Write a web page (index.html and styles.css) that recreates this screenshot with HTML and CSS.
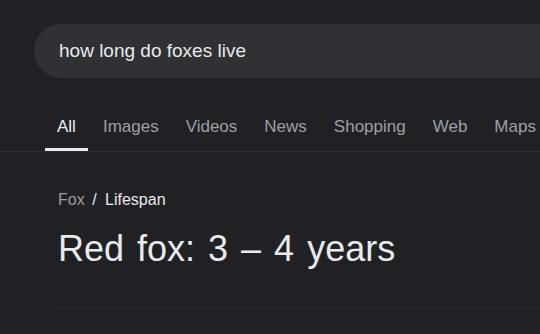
FILE: index.html
```html
<!DOCTYPE html>
<html lang="en">
<head>
    <meta charset="UTF-8">
    <meta name="viewport" content="width=device-width, initial-scale=1.0">
    <title>how long do foxes live - Search</title>
    <link rel="stylesheet" href="styles.css">
</head>
<body>
    <div class="search-bar">
        <span class="query">how long do foxes live</span>
    </div>

    <nav class="tabs">
        <a class="tab active" href="#">All</a>
        <a class="tab" href="#">Images</a>
        <a class="tab" href="#">Videos</a>
        <a class="tab" href="#">News</a>
        <a class="tab" href="#">Shopping</a>
        <a class="tab" href="#">Web</a>
        <a class="tab" href="#">Maps</a>
    </nav>

    <div class="answer">
        <div class="crumbs">
            <span class="crumb-parent">Fox</span>
            <span class="crumb-sep">/</span>
            <span class="crumb-current">Lifespan</span>
        </div>
        <h1 class="answer-title">Red fox: 3 – 4 years</h1>
        <div class="answer-rule"></div>
    </div>
</body>
</html>
```

FILE: styles.css
```css
body {
    font-family: Arial, "Liberation Sans", sans-serif;
    background-color: #202124;
    color: #e8eaed;
    margin: 0;
    overflow: hidden;
}
.search-bar {
    display: flex;
    align-items: center;
    height: 54px;
    margin: 24px 0 0 34px;
    padding-left: 25px;
    background-color: #303134;
    border-radius: 27px 0 0 27px;
}
.query {
    font-size: 19px;
    color: #e8eaed;
    white-space: nowrap;
}
.tabs {
    display: flex;
    gap: 3px;
    margin-top: 39px;
    padding-left: 45px;
    border-bottom: 1px solid #2e2f32;
    white-space: nowrap;
}
.tab {
    display: block;
    padding: 0 12px 11px;
    font-size: 17px;
    line-height: 20px;
    color: #9aa0a6;
    text-decoration: none;
    border-bottom: 3px solid transparent;
}
.tab.active {
    color: #e8eaed;
    border-bottom-color: #e8eaed;
}
.answer {
    padding-left: 58px;
    padding-top: 38px;
}
.crumbs {
    font-size: 16px;
    line-height: 20px;
}
.crumb-parent {
    color: #9aa0a6;
}
.crumb-sep {
    margin: 0 4px 0 3px;
    color: #e8eaed;
}
.answer-title {
    margin: 17px 0 0;
    font-size: 36px;
    font-weight: normal;
    line-height: 44px;
    word-spacing: 3px;
    color: #e8eaed;
}
.answer-rule {
    margin-top: 37px;
    height: 1px;
    background-color: #2e2f32;
}
```
